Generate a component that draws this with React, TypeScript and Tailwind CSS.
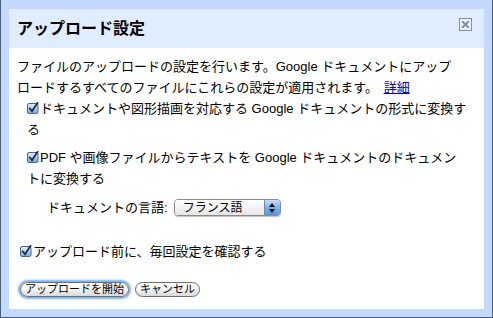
import React from 'react';

const Checkbox: React.FC<{ id: string }> = ({ id }) => (
  <svg width="12" height="12" viewBox="0 0 12 12" className="inline-block align-[-1px] mr-px">
    <defs>
      <linearGradient id={id} x1="0" y1="0" x2="0" y2="1">
        <stop offset="0" stopColor="#e2f0ff" />
        <stop offset="1" stopColor="#74a9e2" />
      </linearGradient>
    </defs>
    <rect x="0.5" y="1.5" width="10.5" height="10" rx="1.5" fill={`url(#${id})`} stroke="#4e6480" />
    <path d="M2.6 6.3 L5 9.3 L10.6 0.8" stroke="#1a2a3c" strokeWidth="1.7" fill="none" strokeLinecap="round" />
  </svg>
);

const LanguageSelect: React.FC = () => (
  <div className="flex h-[17px] w-[107px] overflow-hidden rounded-[4px] border border-[#8a8a8a] shadow-[0_1px_1px_rgba(0,0,0,0.25)]">
    <div className="flex flex-1 items-center bg-gradient-to-b from-white to-[#e6e6e6] pl-[8px] text-[12px] leading-none">
      フランス語
    </div>
    <div className="flex w-[16px] flex-col items-center justify-center gap-[2px] border-l border-[#6a8cc0] bg-gradient-to-b from-[#c7e0fb] via-[#7db4ee] to-[#4f95e6]">
      <svg width="6" height="4" viewBox="0 0 6 4">
        <path d="M0 4 L3 0 L6 4 Z" fill="#111" />
      </svg>
      <svg width="6" height="4" viewBox="0 0 6 4">
        <path d="M0 0 L3 4 L6 0 Z" fill="#111" />
      </svg>
    </div>
  </div>
);

const PillButton: React.FC<{ focused?: boolean; children: React.ReactNode }> = ({ focused, children }) => (
  <button
    className={`h-[15px] rounded-full border border-[#6e6e6e] bg-gradient-to-b from-white via-[#f4f4f4] to-[#d9d9d9] px-[4px] text-[11px] leading-none text-black ${
      focused ? 'shadow-[0_0_2px_2px_#7fb0e8]' : ''
    }`}
  >
    {children}
  </button>
);

export default function App() {
  return (
    <div
      className="h-[318px] w-[493px] border-x border-b border-[#4b5d75] bg-[#c3d9ff] px-[8px] pt-[9px] pb-[8px] text-black"
      style={{ fontFamily: '"Liberation Sans", "Noto Sans CJK JP", sans-serif' }}
    >
      <div className="flex h-full flex-col bg-white">
        <div className="flex h-[39px] items-center justify-between bg-[#e0ecff] pl-[8px] pr-[12px]">
          <h1 className="text-[16px] font-bold leading-none">アップロード設定</h1>
          <button className="flex h-[13px] w-[13px] items-center justify-center self-start mt-[9px] border border-[#7b8fb0] bg-[#eef4ff]">
            <svg width="9" height="9" viewBox="0 0 9 9">
              <path d="M1.2 1.2 L7.8 7.8 M7.8 1.2 L1.2 7.8" stroke="#7b8fb0" strokeWidth="2" />
            </svg>
          </button>
        </div>

        <div className="whitespace-nowrap pl-[8px] pr-[4px] pt-[8px] text-[13px] leading-[21px]">
          <p>
            ファイルのアップロードの設定を行います。Google ドキュメントにアップ
            <br />
            ロードするすべてのファイルにこれらの設定が適用されます。{' '}
            <a href="#" className="ml-[2px] text-[#0000cc] underline">
              詳細
            </a>
          </p>

          <label className="ml-[10px] block">
            <Checkbox id="cb1" />
            ドキュメントや図形描画を対応する Google ドキュメントの形式に変換す
            <br />る
          </label>

          <label className="ml-[10px] mt-[7px] block">
            <Checkbox id="cb2" />
            PDF や画像ファイルからテキストを Google ドキュメントのドキュメン
            <br />
            トに変換する
          </label>

          <div className="ml-[30px] mt-[8px] flex h-[21px] items-center gap-[6px]">
            <span>ドキュメントの言語:</span>
            <LanguageSelect />
          </div>

          <label className="ml-[3px] mt-[23px] block">
            <Checkbox id="cb3" />
            アップロード前に、毎回設定を確認する
          </label>

          <div className="ml-[3px] mt-[20px] flex gap-[6px]">
            <PillButton focused>アップロードを開始</PillButton>
            <PillButton>キャンセル</PillButton>
          </div>
        </div>
      </div>
    </div>
  );
}
